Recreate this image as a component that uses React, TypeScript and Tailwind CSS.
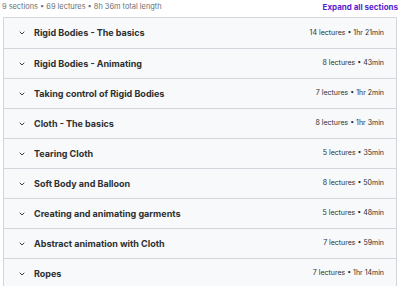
import { ChevronDown } from "lucide-react";

type Section = {
  title: string;
  meta: string;
};

const sections: Section[] = [
  { title: "Rigid Bodies - The basics", meta: "14 lectures • 1hr 21min" },
  { title: "Rigid Bodies - Animating", meta: "8 lectures • 43min" },
  { title: "Taking control of Rigid Bodies", meta: "7 lectures • 1hr 2min" },
  { title: "Cloth - The basics", meta: "8 lectures • 1hr 3min" },
  { title: "Tearing Cloth", meta: "5 lectures • 35min" },
  { title: "Soft Body and Balloon", meta: "8 lectures • 50min" },
  { title: "Creating and animating garments", meta: "5 lectures • 48min" },
  { title: "Abstract animation with Cloth", meta: "7 lectures • 59min" },
  { title: "Ropes", meta: "7 lectures • 1hr 14min" },
];

function SectionRow({ section }: { section: Section }) {
  return (
    <div className="flex h-[30px] items-center justify-between border-t border-[#d1d7dc] bg-[#f7f9fa] pl-[14px] pr-[12px] first:border-t-0">
      <div className="flex items-center gap-[8px]">
        <ChevronDown className="size-[8px] text-[#2d2f31]" strokeWidth={2.8} />
        <span className="text-[9px] font-bold text-[#2d2f31]">{section.title}</span>
      </div>
      <span className="text-[7px] text-[#2d2f31]">{section.meta}</span>
    </div>
  );
}

export default function App() {
  return (
    <div className="h-[286px] w-[400px] overflow-hidden bg-white font-['Inter',sans-serif]">
      <div className="mb-[4px] flex h-[13px] items-center justify-between px-[2px]">
        <span className="text-[7.4px] text-[#6a6f73]">
          9 sections • 69 lectures • 8h 36m total length
        </span>
        <button className="text-[8px] font-bold text-[#5624d0]">Expand all sections</button>
      </div>
      <div className="mx-[3px] border border-[#d1d7dc]">
        {sections.map((section) => (
          <SectionRow key={section.title} section={section} />
        ))}
      </div>
    </div>
  );
}
